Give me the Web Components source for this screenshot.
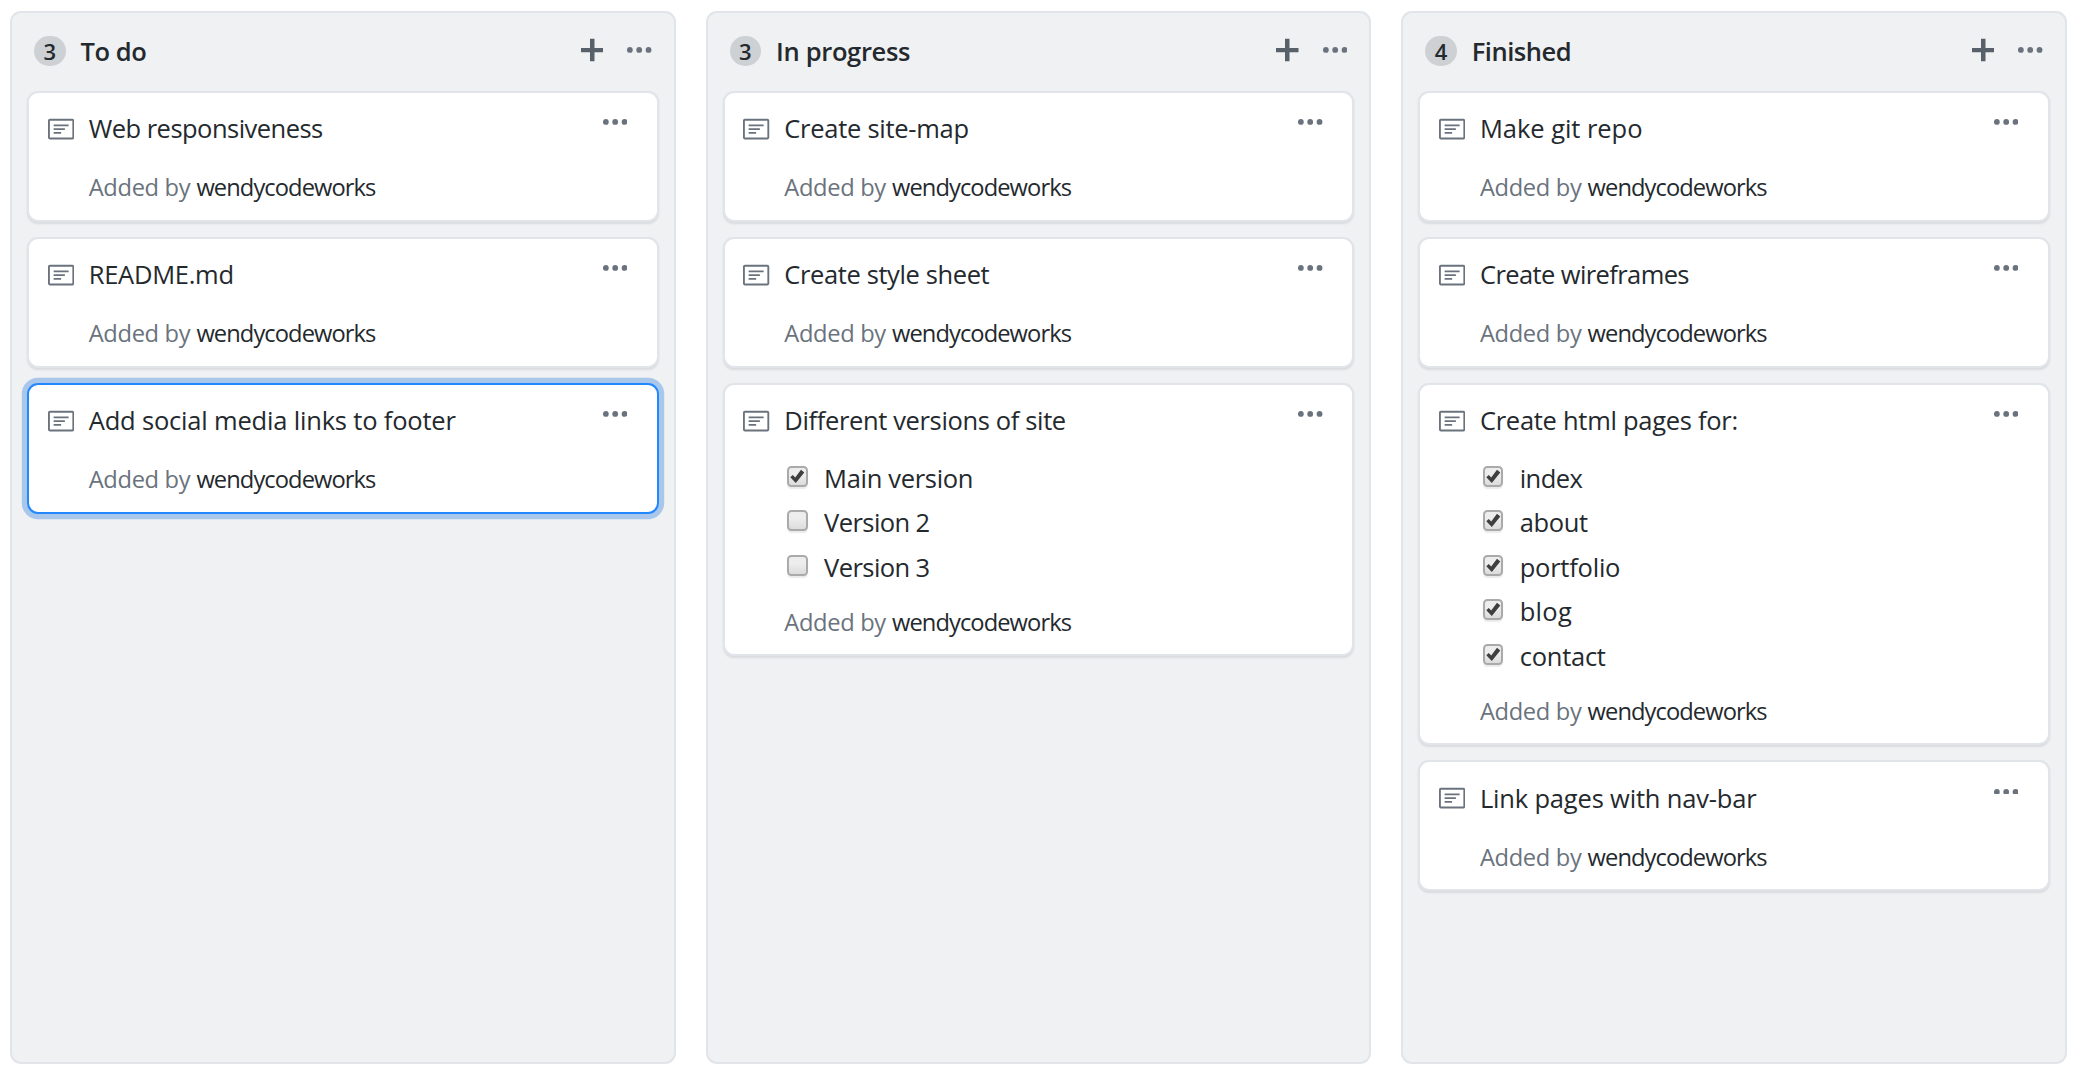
<!DOCTYPE html>
<html lang="en">
<head>
<meta charset="utf-8">
<title>Project board</title>
<style>
  html, body { margin: 0; height: 100%; }
  body { background: #fff; color: #24292e; font-family: "Open Sans", "Noto Sans", sans-serif; overflow: hidden; }
</style>
</head>
<body>
<project-board>
  <board-column count="3" heading="To do" fit="66">
    <note-card><fit-text slot="title" w="234">Web responsiveness</fit-text></note-card>
    <note-card><fit-text slot="title" w="145">README.md</fit-text></note-card>
    <note-card selected><fit-text slot="title" w="367">Add social media links to footer</fit-text></note-card>
  </board-column>
  <board-column count="3" heading="In progress" fit="134">
    <note-card><fit-text slot="title" w="184.5">Create site-map</fit-text></note-card>
    <note-card><fit-text slot="title" w="205">Create style sheet</fit-text></note-card>
    <note-card>
      <fit-text slot="title" w="281.5">Different versions of site</fit-text>
      <task-item checked><fit-text w="149">Main version</fit-text></task-item>
      <task-item><fit-text w="105.5">Version 2</fit-text></task-item>
      <task-item><fit-text w="105.5">Version 3</fit-text></task-item>
    </note-card>
  </board-column>
  <board-column count="4" heading="Finished" fit="99.5">
    <note-card><fit-text slot="title" w="162.5">Make git repo</fit-text></note-card>
    <note-card><fit-text slot="title" w="209">Create wireframes</fit-text></note-card>
    <note-card>
      <fit-text slot="title" w="258">Create html pages for:</fit-text>
      <task-item checked><fit-text w="62.5">index</fit-text></task-item>
      <task-item checked><fit-text w="68">about</fit-text></task-item>
      <task-item checked><fit-text w="100.5">portfolio</fit-text></task-item>
      <task-item checked><fit-text w="52.5">blog</fit-text></task-item>
      <task-item checked><fit-text w="86">contact</fit-text></task-item>
    </note-card>
    <note-card><fit-text slot="title" w="276.5">Link pages with nav-bar</fit-text></note-card>
  </board-column>
</project-board>

<script>
const define = (name, html, setup) => {
  const tpl = document.createElement('template');
  tpl.innerHTML = html;
  customElements.define(name, class extends HTMLElement {
    connectedCallback() {
      if (this.shadowRoot) return;
      this.attachShadow({ mode: 'open' }).append(tpl.content.cloneNode(true));
      if (setup) setup(this, this.shadowRoot);
    }
  });
};

define('project-board', `
  <style>
    :host { display: flex; gap: 30px; box-sizing: border-box; height: 1077px; padding: 11px 0 13px 10px; }
  </style>
  <slot></slot>`);

define('dots-icon', `
  <style>:host { display: block; width: 24.4px; height: 5.8px; color: #6a737d; } svg { display: block; }</style>
  <svg width="24.4" height="5.8" viewBox="0 0 13 3.1" fill="currentColor">
    <circle cx="1.5" cy="1.55" r="1.55"/><circle cx="6.5" cy="1.55" r="1.55"/><circle cx="11.5" cy="1.55" r="1.55"/>
  </svg>`);

define('board-column', `
  <style>
    :host { display: flex; flex-direction: column; box-sizing: border-box; flex: 0 0 665.6px;
      border: 2px solid #e1e4e8; border-radius: 11px; background: #eff1f3; }
    header { display: flex; align-items: center; box-sizing: border-box; height: 78px; padding: 0 22px 2px 22px; }
    .count { box-sizing: border-box; width: 31.5px; height: 30px; border-radius: 15px;
      background: #ced1d4; font-size: 22px; font-weight: 600; line-height: 31px; text-align: center; }
    h3 { margin: 1px auto 0 15px; font-size: 25.5px; font-weight: 600; line-height: 39px; }
    .plus { display: block; margin-right: 24.2px; color: #586069; }
    .plus, dots-icon { margin-top: -2px; }
    .cards { display: flex; flex-direction: column; gap: 15px; padding: 0 15px; }
  </style>
  <header>
    <span class="count"></span><h3></h3>
    <svg class="plus" width="22.5" height="30" viewBox="0 0 12 16" fill="currentColor"><path d="M12 9.2H7.2V14H4.8V9.2H0V6.9h4.8V2h2.4v4.9H12z"/></svg>
    <dots-icon></dots-icon>
  </header>
  <div class="cards"><slot></slot></div>`,
  (el, root) => {
    root.querySelector('.count').textContent = el.getAttribute('count');
    const t = document.createElement('fit-text');
    t.setAttribute('w', el.getAttribute('fit'));
    t.textContent = el.getAttribute('heading');
    root.querySelector('h3').append(t);
  });

define('note-card', `
  <style>
    :host { display: flex; align-items: flex-start; box-sizing: border-box; background: #fff;
      border: 2px solid #e1e4e8; border-radius: 11px; padding: 15.6px 29.5px 14.5px 18.7px;
      box-shadow: 0 1.9px 1.9px rgba(27,31,35,.1); }
    :host([selected]) { border-color: #2188ff; box-shadow: 0 0 0 5.2px rgba(3,102,214,.3); }
    .note { flex: none; display: block; margin: 6.3px 14.8px 0 0; color: #6a737d; }
    .body { flex: 1; min-width: 0; padding-top: .7px; }
    .title { font-size: 25.5px; line-height: 39px; white-space: nowrap; }
    .tasks { padding: 15.9px 0 14.5px; }
    .tasks.none { padding: 21.1px 0 0; }
    .by { font-size: 23.7px; line-height: 36px; white-space: nowrap; display: flex; gap: 6.2px; color: #6a737d; }
    .by .user { color: #24292e; }
    dots-icon { margin-top: 10.5px; }
  </style>
  <svg class="note" width="26.25" height="30" viewBox="0 0 14 16" fill="currentColor"><path fill-rule="evenodd" d="M3 10h4V9H3v1zm0-2h6V7H3v1zm0-2h8V5H3v1zm10 6H1V3h12v9zM1 2c-.55 0-1 .45-1 1v9c0 .55.45 1 1 1h12c.55 0 1-.45 1-1V3c0-.55-.45-1-1-1H1z"/></svg>
  <div class="body">
    <div class="title"><slot name="title"></slot></div>
    <div class="tasks"><slot></slot></div>
    <div class="by"><fit-text w="101.5">Added by</fit-text><fit-text class="user" w="179">wendycodeworks</fit-text></div>
  </div>
  <dots-icon></dots-icon>`,
  (el, root) => {
    if (!el.querySelector('task-item')) root.querySelector('.tasks').classList.add('none');
  });

define('task-item', `
  <style>
    :host { display: flex; align-items: center; height: 44.5px; font-size: 25.5px; line-height: 44.5px; padding-left: 2.8px; white-space: nowrap; }
    .box { box-sizing: border-box; width: 20.6px; height: 20.6px; margin: -3.8px 16.4px 0 0; border: 2px solid #aaa; border-radius: 4.5px;
      background: linear-gradient(#ededed 0 38%, #dcdcdc); background-color: #ddd; box-shadow: 0 1.9px 1px rgba(0,0,0,.08); }
    svg { display: none; margin: -2px; }
    :host([checked]) svg { display: block; }
  </style>
  <div class="box"><svg width="20.6" height="20.6" viewBox="0 0 20.6 20.6"><path fill="#3f3f3f" d="M3.3 11.3 5.7 9l2.5 2.5L14 3.8l3.3 2.8L8.8 17z"/></svg></div>
  <slot></slot>`);

/* Spreads its text over the width given in w by adjusting letter-spacing. */
define('fit-text', `
  <style>:host { display: inline-block; white-space: nowrap; }</style>
  <slot></slot>`,
  el => queueMicrotask(() => {
    const natural = el.getBoundingClientRect().width;
    const n = el.textContent.length;
    if (natural && n) el.style.letterSpacing = ((+el.getAttribute('w') - natural) / n).toFixed(3) + 'px';
  }));
</script>
</body>
</html>
